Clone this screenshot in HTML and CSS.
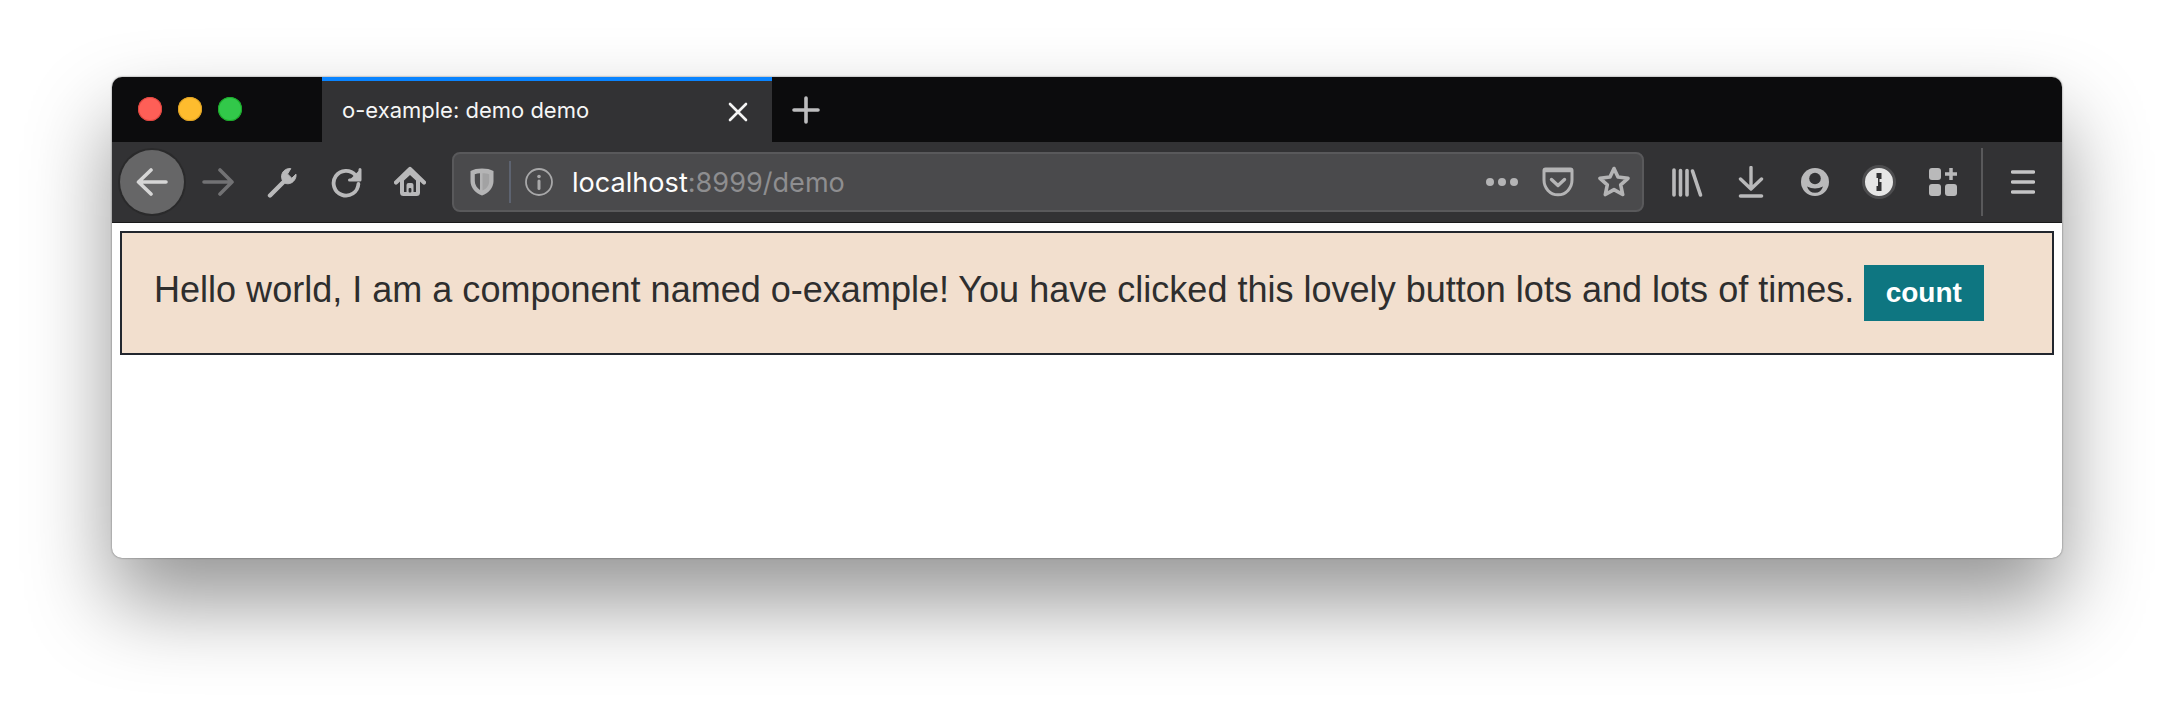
FILE: index.html
```html
<!DOCTYPE html>
<html lang="en">
<head>
<meta charset="utf-8">
<title>o-example: demo demo</title>
<link rel="stylesheet" href="styles.css">
</head>
<body>
<div class="window">
  <div class="tabbar">
    <div class="lights">
      <span class="light red"></span>
      <span class="light yellow"></span>
      <span class="light green"></span>
    </div>
    <div class="tab">
      <span class="tab-title">o-example: demo demo</span>
      <svg class="tab-close" width="20" height="20" viewBox="0 0 20 20"><path d="M2 2 18 18M18 2 2 18" stroke="#f4f4f4" stroke-width="2.6" stroke-linecap="round"/></svg>
    </div>
    <div class="newtab">
      <svg width="28" height="28" viewBox="0 0 28 28"><path d="M14 2V26M2 14H26" stroke="#bdbdbe" stroke-width="3.6" stroke-linecap="round"/></svg>
    </div>
  </div>
  <div class="toolbar">
    <div class="slot back">
      <svg width="32" height="32" viewBox="0 0 32 32"><path d="M2.5 16H30M15 4 2.5 16 15 28" fill="none" stroke="#d6d6d6" stroke-width="3.6" stroke-linecap="round" stroke-linejoin="round"/></svg>
    </div>
    <div class="slot">
      <svg width="32" height="32" viewBox="0 0 32 32"><path d="M2 16H30M18 4 30 16 18 28" fill="none" stroke="#727274" stroke-width="3.6" stroke-linecap="round" stroke-linejoin="round"/></svg>
    </div>
    <div class="slot">
      <svg width="32" height="32" viewBox="0 0 32 32"><path d="M4 29.5 17 16.5" stroke="#b9b9ba" stroke-width="4.4" stroke-linecap="round"/><path d="M24.8 2.6C19.5 2 15.3 6 15.6 11.2 15.7 13 16.4 15 17.5 16.2 19.3 17.6 21.3 18 23.2 17.6 27.5 16.8 30.5 12.5 30 8.2L25.8 12.2 21.5 8Z" fill="#b9b9ba" stroke="#b9b9ba" stroke-width="1" stroke-linejoin="round"/></svg>
    </div>
    <div class="slot">
      <svg width="32" height="32" viewBox="0 0 32 32"><path d="M25.5 9.2A12.4 12.4 0 1 0 28.4 18" fill="none" stroke="#b9b9ba" stroke-width="3.8" stroke-linecap="round"/><path d="M30 3.5V14H19.5" fill="#b9b9ba" stroke="#b9b9ba" stroke-width="3" stroke-linecap="round" stroke-linejoin="round"/></svg>
    </div>
    <div class="slot">
      <svg width="32" height="32" viewBox="0 0 32 32"><path d="M2 16.5 16 3 30 16.5" fill="none" stroke="#b9b9ba" stroke-width="4.2" stroke-linecap="round" stroke-linejoin="round"/><path d="M6 14V26.5A3.5 3.5 0 0 0 9.5 30H22.5A3.5 3.5 0 0 0 26 26.5V14L16 5Z" fill="#b9b9ba"/><path d="M10 14.5 16 9 22 14.5V26H19.5V19A2 2 0 0 0 17.5 17H14.5A2 2 0 0 0 12.500 19V26H10Z" fill="#323234"/><rect x="14.6" y="22" width="2.8" height="4.5" rx="1" fill="#323234"/></svg>
    </div>
    <div class="urlbar">
      <svg class="url-shield" width="26" height="30" viewBox="0 0 26 30"><path d="M13 1.5C8.5 1.5 4.5 2.3 1.5 4V14C1.5 21 6.5 26 13 28.5 19.5 26 24.5 21 24.5 14V4C21.5 2.3 17.5 1.5 13 1.5Z" fill="#b4b4b5"/><path d="M11 6.2C9.3 6.3 7.5 6.6 5.8 7.2V14C5.8 18 8 21 11 23Z" fill="#4a4a4c"/><path d="M13.5 6.2C15.5 6.3 18.5 6.6 20.2 7.2V14C20.2 18.5 17.5 21.8 13.5 23.6Z" fill="#a2a2a3"/></svg>
      <span class="url-sep"></span>
      <svg class="url-info" width="28" height="28" viewBox="0 0 28 28"><circle cx="14" cy="14" r="13" fill="none" stroke="#a8a8a9" stroke-width="1.8"/><circle cx="14" cy="8.5" r="1.8" fill="#a8a8a9"/><path d="M14 13V20.5" stroke="#a8a8a9" stroke-width="3" stroke-linecap="round"/></svg>
      <span class="url-text"><span class="url-host">localhost</span>:8999/demo</span>
      <svg class="url-dots" width="32" height="8" viewBox="0 0 32 8"><circle cx="4" cy="4" r="4" fill="#b4b4b5"/><circle cx="16" cy="4" r="4" fill="#b4b4b5"/><circle cx="28" cy="4" r="4" fill="#b4b4b5"/></svg>
      <svg class="url-pocket" width="32" height="30" viewBox="0 0 32 30"><path d="M3.5 2H28.5A1.5 1.5 0 0 1 30 3.5V13C30 21 24 27.8 16 27.8 8 27.8 2 21 2 13V3.5A1.5 1.5 0 0 1 3.5 2Z" fill="none" stroke="#b4b4b5" stroke-width="3"/><path d="M3 3.5H29" stroke="#b4b4b5" stroke-width="3.5"/><path d="M9.5 12.5 16 18.5 22.5 12.5" fill="none" stroke="#b4b4b5" stroke-width="3.4" stroke-linecap="round" stroke-linejoin="round"/></svg>
      <svg class="url-star" width="32" height="32" viewBox="0 0 32 32"><path d="M16 2.5 20 11 30 12.3 22.7 18.8 24.7 28.5 16 23.6 7.3 28.5 9.3 18.8 2 12.3 12 11Z" fill="none" stroke="#b4b4b5" stroke-width="3.6" stroke-linejoin="round"/></svg>
    </div>
    <div class="tools">
      <div class="slot">
        <svg width="32" height="32" viewBox="0 0 32 32"><path d="M3 4V29M9.5 4.5V29M16 4.5V29M21.5 5 29.5 29" fill="none" stroke="#b9b9ba" stroke-width="3.6" stroke-linecap="round"/></svg>
      </div>
      <div class="slot">
        <svg width="32" height="32" viewBox="0 0 32 32"><path d="M16 1.5V22M5.5 13 16 23 26.5 13" fill="none" stroke="#b9b9ba" stroke-width="3.4" stroke-linecap="round" stroke-linejoin="round"/><path d="M5.5 30H26.5" stroke="#b9b9ba" stroke-width="3.6" stroke-linecap="round"/></svg>
      </div>
      <div class="slot">
        <svg width="32" height="32" viewBox="0 0 32 32"><circle cx="16" cy="16" r="14" fill="#b9b9ba"/><circle cx="16" cy="12.5" r="5.8" fill="#323234"/><path d="M8 20.5Q16 24.5 24 20.5 22 26.8 16 26.8 10 26.8 8 20.5Z" fill="#323234"/></svg>
      </div>
      <div class="slot">
        <svg width="34" height="34" viewBox="0 0 34 34"><circle cx="17" cy="17" r="15.5" fill="#e6e6e6" stroke="#4d4d4f" stroke-width="3"/><path d="M14.5 8H19.5V14H17.5V17H19.5V26H14.5V21H16V13H14.5Z" fill="#323234"/></svg>
      </div>
      <div class="slot">
        <svg width="32" height="32" viewBox="0 0 32 32"><rect x="2" y="2" width="12" height="12" rx="3" fill="#b9b9ba"/><rect x="2" y="18" width="12" height="12" rx="3" fill="#b9b9ba"/><rect x="18" y="18" width="12" height="12" rx="3" fill="#b9b9ba"/><path d="M24 2V14M18 8H30" stroke="#b9b9ba" stroke-width="3.5"/></svg>
      </div>
    </div>
    <span class="tool-sep"></span>
    <div class="slot menu">
      <svg width="24" height="24" viewBox="0 0 24 24"><path d="M1.5 2H22.5M1.5 12H22.5M1.5 22H22.5" stroke="#c4c4c5" stroke-width="3.4" stroke-linecap="round"/></svg>
    </div>
  </div>
  <main class="page">
    <div class="demo">
      <span class="demo-text">Hello world, I am a component named o-example! You have clicked this lovely button lots and lots of times.</span>
      <button class="count" type="button">count</button>
    </div>
  </main>
</div>
</body>
</html>
```
FILE: styles.css
```css
* { box-sizing: border-box; }
html, body { margin: 0; height: 100%; }
body {
  background: #fff;
  padding: 77px 112px 0;
  overflow: hidden;
  font-family: "Liberation Sans", Arial, sans-serif;
}
.window {
  width: 1950px;
  height: 481px;
  border-radius: 10px;
  overflow: clip;
  display: flex;
  flex-direction: column;
  background: #fff;
  box-shadow: 0 44px 84px rgba(0,0,0,.42), 0 0 2px rgba(0,0,0,.55);
}
.tabbar {
  height: 65px;
  flex: none;
  background: #0c0c0d;
  display: flex;
}
.lights {
  width: 210px;
  flex: none;
  display: flex;
  align-items: center;
  gap: 16px;
  padding: 0 0 1px 26px;
}
.light {
  width: 24px;
  height: 24px;
  border-radius: 50%;
}
.red { background: #fe5f57; box-shadow: inset 0 0 0 1px #e0443e; }
.yellow { background: #febc2e; box-shadow: inset 0 0 0 1px #dea123; }
.green { background: #32c84a; box-shadow: inset 0 0 0 1px #1aab29; }
.tab {
  width: 450px;
  flex: none;
  background: #323234;
  border-top: 4px solid #0a84ff;
  display: flex;
  align-items: center;
  justify-content: space-between;
  padding: 0 24px 0 20px;
}
.tab-title {
  color: #f6f6f6;
  font-family: Inter, sans-serif;
  font-size: 22px;
  margin-bottom: 3px;
}
.newtab {
  padding-left: 20px;
  display: flex;
  align-items: center;
}
.toolbar {
  height: 81px;
  flex: none;
  background: #323234;
  border-bottom: 1px solid #1a1a1b;
  display: flex;
  align-items: center;
  padding-left: 8px;
}
.slot {
  width: 64px;
  height: 64px;
  flex: none;
  display: flex;
  align-items: center;
  justify-content: center;
}
.back {
  background: #666667;
  border-radius: 50%;
  box-shadow: 0 0 0 2px #2a2a2b;
  margin-right: 2px;
}
.urlbar {
  width: 1192px;
  height: 60px;
  flex: none;
  margin-left: 10px;
  background: #4a4a4c;
  border: 2px solid #59595b;
  border-radius: 8px;
  display: flex;
  align-items: center;
  padding-left: 15px;
}
.url-sep {
  width: 2px;
  height: 42px;
  margin: 0 14px 0 14px;
  background: #5d6370;
}
.url-text {
  color: #8e8e90;
  font-family: Inter, sans-serif;
  font-size: 27.1px;
  margin-left: 19px;
  flex: 1;
}
.url-host { color: #fdfdfd; }
.url-pocket { margin-left: 24px; }
.url-star { margin-left: 24px; margin-right: 12px; }
.tools {
  display: flex;
  margin-left: 11px;
}
.tool-sep {
  width: 2px;
  height: 68px;
  margin-left: 6px;
  background: #59595b;
}
.menu { margin-left: 8px; }
.page {
  flex: 1;
  padding: 8px;
}
.demo {
  height: 124px;
  background: #f2dfce;
  border: 2px solid #22262e;
  display: flex;
  align-items: center;
  padding-left: 32px;
}
.demo-text {
  color: #2e2e2e;
  font-size: 36px;
  letter-spacing: .013px;
  margin-bottom: 6px;
}
.count {
  width: 120px;
  height: 56px;
  margin-left: 9.5px;
  border: 0;
  padding: 0;
  background: #0e7681;
  color: #fff;
  font-family: "Liberation Sans", Arial, sans-serif;
  font-size: 28px;
  font-weight: 700;
}
```
